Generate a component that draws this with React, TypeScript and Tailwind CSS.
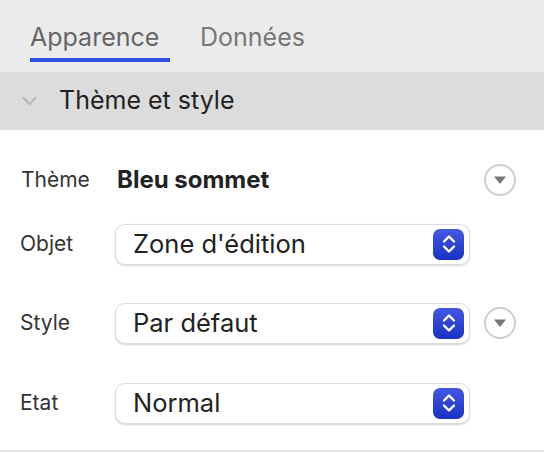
import React from "react";

const font = { fontFamily: "Inter, 'Liberation Sans', sans-serif" };

function Stepper() {
  return (
    <div className="flex h-[31px] w-[31px] items-center justify-center rounded-[7px] bg-gradient-to-b from-[#4459e0] to-[#1b30c2]">
      <svg width="16" height="22" viewBox="0 0 16 22" fill="none" stroke="white" strokeWidth="2.4" strokeLinecap="round" strokeLinejoin="round">
        <path d="M3 8.5 8 3.5l5 5" />
        <path d="M3 13.5l5 5 5-5" />
      </svg>
    </div>
  );
}

function Select({ value }: { value: string }) {
  return (
    <div className="flex h-[41px] w-[355px] items-center justify-between rounded-[10px] border border-[#dcdcdc] bg-white pl-[17px] pr-[5px] shadow-[0_1px_2px_rgba(0,0,0,0.18)]">
      <span className="text-[25.5px] text-[#222]">{value}</span>
      <Stepper />
    </div>
  );
}

function CircleBtn() {
  return (
    <div className="flex h-[32px] w-[32px] items-center justify-center rounded-full border-2 border-[#cdcdcd]">
      <svg width="14" height="10" viewBox="0 0 14 10">
        <path d="M1 1.5h12L7 9z" fill="#777" />
      </svg>
    </div>
  );
}

export default function App() {
  const rows = [
    { label: "Objet", value: "Zone d'édition", circle: false, mt: "mt-[4px]" },
    { label: "Style", value: "Par défaut", circle: true, mt: "mt-[19px]" },
    { label: "Etat", value: "Normal", circle: false, mt: "mt-[20px]" },
  ];

  return (
    <div className="h-[454px] w-[544px] overflow-hidden bg-white" style={font}>
      <div className="flex h-[72px] bg-[#ebebeb] pl-[30px]">
        <div className="flex h-full w-[140px] flex-col">
          <span className="mt-[20px] text-[25px] leading-[34px] text-[#666]">Apparence</span>
          <div className="mt-[4px] h-[4px] w-full bg-[#3050e0]" />
        </div>
        <span className="ml-[30px] mt-[20px] text-[25px] leading-[34px] text-[#777]">Données</span>
      </div>

      <div className="flex h-[58px] items-center bg-[#dcdcdc] pl-[22px]">
        <svg width="15" height="10" viewBox="0 0 15 10" fill="none" stroke="#b5b5b5" strokeWidth="2" strokeLinecap="round" strokeLinejoin="round">
          <path d="M1.5 2 7.5 8l6-6" />
        </svg>
        <span className="ml-[22px] text-[25px] text-[#222]">Thème et style</span>
      </div>

      <div className="flex h-[322px] flex-col border-b-2 border-[#e2e2e2] pt-[20px]">
        <div className="flex h-[60px] items-center pl-[21px] pr-[28px]">
          <span className="w-[96px] text-[21px] text-[#333]">Thème</span>
          <span className="flex-1 text-[24px] font-bold text-[#222]">Bleu sommet</span>
          <CircleBtn />
        </div>
        {rows.map((r) => (
          <div key={r.label} className={`flex h-[60px] items-center pl-[20px] ${r.mt}`}>
            <span className="w-[95px] text-[21px] text-[#333]">{r.label}</span>
            <Select value={r.value} />
            {r.circle && <div className="ml-[14px]"><CircleBtn /></div>}
          </div>
        ))}
      </div>
    </div>
  );
}
